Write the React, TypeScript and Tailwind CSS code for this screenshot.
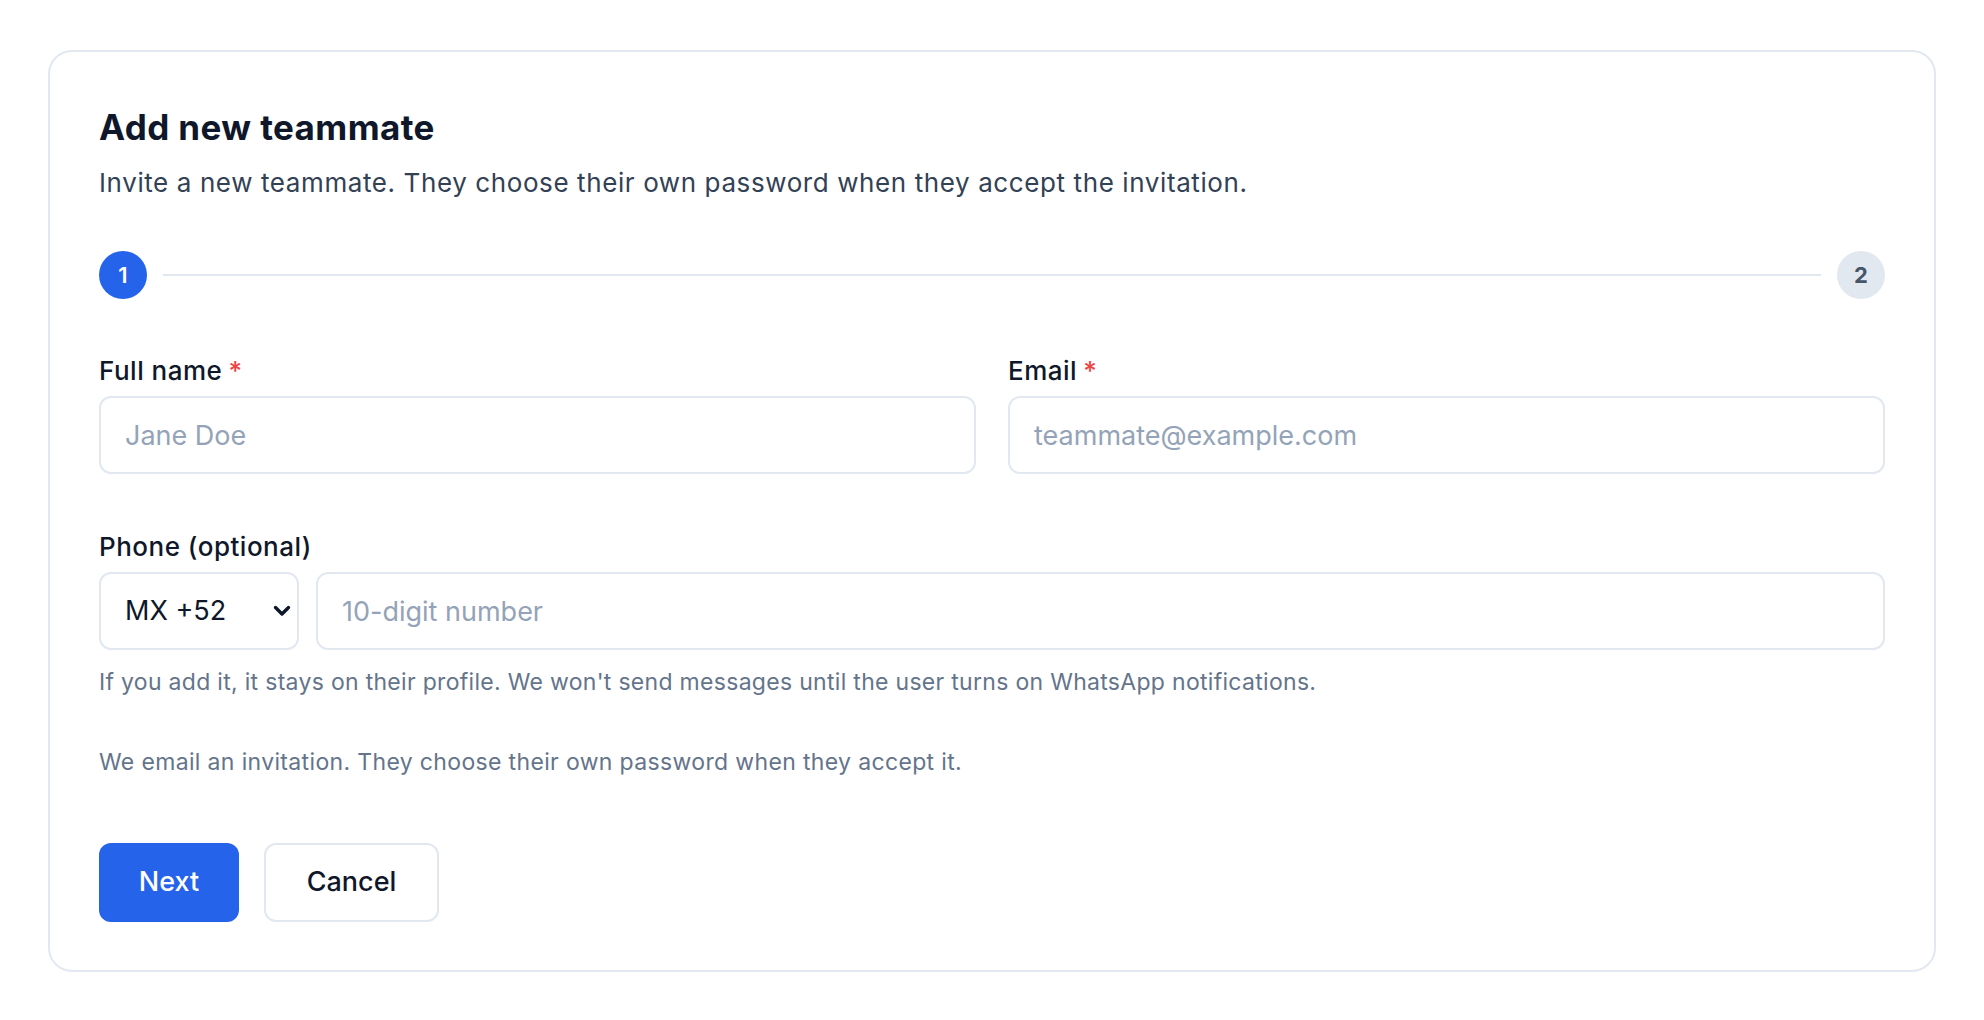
import { useState } from 'react'

function Label({ text, required }: { text: string; required?: boolean }) {
  return (
    <label className="block text-[26px] font-medium leading-[32px] tracking-[0.5px] text-[#0f172a]">
      {text}
      {required && <span className="ml-[6px] text-[#ef4444]">*</span>}
    </label>
  )
}

const inputCls =
  'block h-[78px] w-full rounded-[12px] border-2 border-[#e2e8f0] bg-white px-6 text-[27px] text-[#0f172a] outline-none placeholder:text-[#94a3b8]'

export default function App() {
  const [country, setCountry] = useState('MX')

  return (
    <div className="min-h-screen bg-white px-12 pt-[50px] pb-12 font-['Inter',sans-serif]">
      <div className="rounded-[24px] border-2 border-[#e2e8f0] bg-white px-[49px] pt-[55px] pb-[48px]">
        <h1 className="text-[35px] font-bold leading-[40px] tracking-[0.4px] text-[#0f172a]">Add new teammate</h1>
        <p className="mt-[18px] text-[26px] leading-[36px] tracking-[0.6px] text-[#334155]">
          Invite a new teammate. They choose their own password when they accept the invitation.
        </p>

        {/* stepper */}
        <div className="mt-[50px] flex items-center gap-4">
          <div className="flex h-12 w-12 shrink-0 items-center justify-center rounded-full bg-[#2563eb] text-[22px] font-semibold text-white">
            1
          </div>
          <div className="h-[2px] flex-1 bg-[#e2e8f0]" />
          <div className="flex h-12 w-12 shrink-0 items-center justify-center rounded-full bg-[#e2e8f0] text-[22px] font-bold text-[#475569]">
            2
          </div>
        </div>

        {/* name + email */}
        <div className="mt-[56px] grid grid-cols-2 gap-8">
          <div>
            <Label text="Full name" required />
            <input className={`mt-[9px] ${inputCls}`} placeholder="Jane Doe" />
          </div>
          <div>
            <Label text="Email" required />
            <input className={`mt-[9px] ${inputCls}`} placeholder="teammate@example.com" />
          </div>
        </div>

        {/* phone */}
        <div className="mt-[57px]">
          <Label text="Phone (optional)" />
          <div className="mt-[9px] flex gap-[17px]">
            <div className="relative w-[200px] shrink-0">
              <select
                value={country}
                onChange={(e) => setCountry(e.target.value)}
                className="block h-[78px] w-full appearance-none rounded-[12px] border-2 border-[#e2e8f0] bg-white pl-6 pr-10 text-[27px] text-[#0f172a] outline-none"
              >
                <option value="MX">MX +52</option>
                <option value="US">US +1</option>
                <option value="CO">CO +57</option>
              </select>
              <svg
                className="pointer-events-none absolute right-[8px] top-1/2 -translate-y-1/2"
                width="18"
                height="12"
                viewBox="0 0 18 12"
                fill="none"
              >
                <path d="M2.5 2.5 9 9l6.5-6.5" stroke="#0f172a" strokeWidth="3.4" strokeLinecap="round" strokeLinejoin="round" />
              </svg>
            </div>
            <input className={`flex-1 ${inputCls}`} placeholder="10-digit number" />
          </div>
          <p className="mt-[17px] text-[23px] leading-[30px] tracking-[0.3px] text-[#64748b]">
            If you add it, it stays on their profile. We won't send messages until the user turns on WhatsApp notifications.
          </p>
        </div>

        <p className="mt-[50px] text-[23px] leading-[30px] tracking-[0.35px] text-[#64748b]">
          We email an invitation. They choose their own password when they accept it.
        </p>

        <div className="mt-[66px] flex gap-[25px]">
          <button className="h-[79px] w-[140px] rounded-[12px] bg-[#2563eb] text-[27px] font-medium text-white">
            Next
          </button>
          <button className="h-[79px] w-[175px] rounded-[12px] border-2 border-[#e2e8f0] bg-white text-[27px] font-medium text-[#0f172a]">
            Cancel
          </button>
        </div>
      </div>
    </div>
  )
}
